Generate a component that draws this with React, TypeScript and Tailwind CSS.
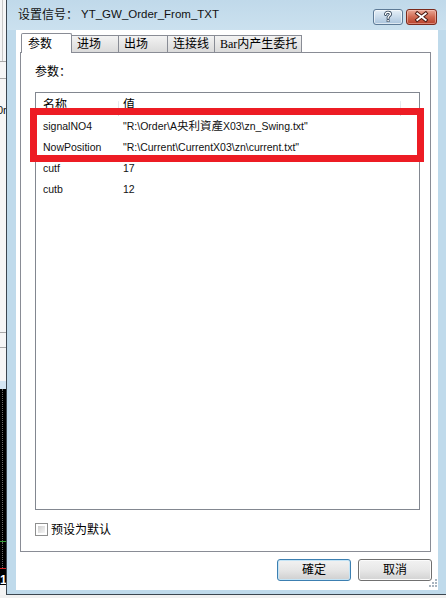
import React from "react";

function HelpBtn() {
  return (
    <div className="w-[30px] h-[16px] rounded-[3px] border border-[#5d7a96] bg-gradient-to-b from-[#e6eff7] via-[#c9dbeb] to-[#a9c3dc] shadow-[inset_0_0_0_1px_rgba(255,255,255,0.6)] flex items-center justify-center">
      <svg width="30" height="16" viewBox="0 0 30 16">
        <path d="M12.4 5.2C12.4 3.7 13.5 2.9 15 2.9C16.6 2.9 17.6 3.7 17.6 5C17.6 6.6 15.1 6.9 15.1 8.7V9.4" fill="none" stroke="#2c3e52" strokeWidth="3.2" strokeLinecap="round" />
        <rect x="13.6" y="10.6" width="3" height="2.8" fill="#2c3e52" />
        <path d="M12.4 5.2C12.4 3.7 13.5 2.9 15 2.9C16.6 2.9 17.6 3.7 17.6 5C17.6 6.6 15.1 6.9 15.1 8.7V9.4" fill="none" stroke="#ffffff" strokeWidth="1.5" strokeLinecap="round" />
        <rect x="14.3" y="11.2" width="1.6" height="1.6" fill="#ffffff" />
      </svg>
    </div>
  );
}

function CloseBtn() {
  return (
    <div className="w-[31px] h-[16px] rounded-[3px] border border-[#7b2a1c] bg-gradient-to-b from-[#e9a796] via-[#d06a52] to-[#b8402a] shadow-[inset_0_0_0_1px_rgba(255,220,210,0.45)] flex items-center justify-center">
      <svg width="31" height="16" viewBox="0 0 31 16">
        <path d="M11 4.2L20 11.2M20 4.2L11 11.2" stroke="#4a1810" strokeWidth="4" strokeLinecap="square" />
        <path d="M11 4.2L20 11.2M20 4.2L11 11.2" stroke="#ffffff" strokeWidth="2" strokeLinecap="square" />
      </svg>
    </div>
  );
}

function LeftStrip() {
  return (
    <div className="w-[6px] flex flex-col bg-[#f6f6f6] overflow-hidden">
      <div className="h-[61px] border-l border-[#c8c8c8] ml-[2px]" />
      <div className="h-px bg-[#a9a9a9]" />
      <div className="h-[16px]" />
      <div className="h-px bg-[#a9a9a9]" />
      <div className="h-[24px]" />
      <div className="h-[14px] text-[11px] leading-[14px] whitespace-nowrap -ml-[3px] text-[#111]">0r</div>
      <div className="h-[215px]" />
      <div className="h-px bg-[#a9a9a9]" />
      <div className="h-[14px]" />
      <div className="h-px bg-[#a9a9a9]" />
      <div className="h-[33px]" />
      <div className="h-[8px] bg-[#d4e6f3]" />
      <div className="h-[196px] bg-black flex flex-col">
        <div className="h-[152px] ml-[2px] border-l border-dotted border-[#6a6a6a]" />
        <div className="h-px bg-[#33a033]" />
        <div className="h-[26px] ml-[2px] border-l border-dotted border-[#6a6a6a]" />
        <div className="h-px bg-[#d42020]" />
        <div className="h-[6px]" />
        <div className="h-[10px] text-white text-[12px] leading-[10px] font-bold">1</div>
      </div>
      <div className="flex-1 bg-[#f4f4f4]" />
    </div>
  );
}

const tabBase =
  "h-[17px] border-t border-r border-[#898c95] bg-gradient-to-b from-[#f3f3f3] to-[#dadada] pl-[5px] flex items-center text-[12px] leading-none whitespace-nowrap";

export default function App() {
  return (
    <div className="relative w-[446px] h-[598px] overflow-hidden bg-[#f0f0f0] [font-family:'Liberation_Sans','Noto_Sans_CJK_SC',sans-serif] text-black">
      <div className="flex h-[595px]">
        <LeftStrip />
        <div className="flex-1 flex flex-col border-l border-b border-[#3b4650] bg-[#bfdaeb]">
          {/* title bar */}
          <div className="h-[30px] flex pl-[11px] pr-[9px] bg-gradient-to-b from-[#c0d9ea] to-[#cbe1ef]">
            <div className="flex items-center text-[12px] leading-none text-[#111]">
              <span>设置信号：</span>
              <span className="ml-[3px] text-[11.5px]">YT_GW_Order_From_TXT</span>
            </div>
            <div className="ml-auto flex gap-[3px] mt-[9px] h-[16px]">
              <HelpBtn />
              <CloseBtn />
            </div>
          </div>

          {/* client area */}
          <div className="relative ml-[9px] mr-[8px] h-[560px] bg-white flex flex-col">
            {/* tabs */}
            <div className="relative z-10 mt-[3px] ml-[5px] h-[19px] flex items-end">
              <div className="w-[51px] h-[20px] -mb-px border border-b-0 border-[#898c95] bg-white pl-[6px] flex items-center text-[12px] leading-none rounded-t-[2px]">
                参数
              </div>
              <div className={tabBase + " w-[47px]"}>进场</div>
              <div className={tabBase + " w-[49px]"}>出场</div>
              <div className={tabBase + " w-[47px]"}>连接线</div>
              <div className={tabBase + " w-[87px]"}>
                <span className="[font-family:'Liberation_Serif',serif] text-[12px]">Bar</span>
                <span>内产生委托</span>
              </div>
            </div>

            {/* panel */}
            <div className="ml-[4px] w-[411px] h-[500px] border border-[#898c95] bg-white flex flex-col pl-[14px] pr-[10px] pt-[11px]">
              <div className="h-[16px] text-[12px] leading-[16px]">参数：</div>

              {/* list view */}
              <div className="mt-[12px] h-[418px] border border-[#828790] bg-white flex flex-col">
                <div className="h-[23px] flex">
                  <div className="w-[82px] pl-[7px] flex items-center text-[12px] leading-none">名称</div>
                  <div className="w-px mt-[8px] bg-gradient-to-b from-[#e8edf2] to-[#d5dbe2]" />
                  <div className="w-[281px] pl-[4px] flex items-center text-[12px] leading-none">值</div>
                  <div className="w-px mt-[8px] bg-gradient-to-b from-[#e8edf2] to-[#d5dbe2]" />
                </div>
                <div className="h-[21px] flex items-center text-[10.5px] leading-none text-[#111]">
                  <div className="w-[82px] pl-[7px] whitespace-nowrap">signalNO4</div>
                  <div className="pl-[5px] whitespace-nowrap">
                    "R:\Order\A<span className="text-[11.5px]">央利資產</span>X03\zn_Swing.txt"
                  </div>
                </div>
                <div className="h-[21px] flex items-center text-[10.5px] leading-none text-[#111]">
                  <div className="w-[82px] pl-[7px] whitespace-nowrap">NowPosition</div>
                  <div className="pl-[5px] whitespace-nowrap">"R:\Current\CurrentX03\zn\current.txt"</div>
                </div>
                <div className="h-[21px] flex items-center text-[10.5px] leading-none text-[#111]">
                  <div className="w-[82px] pl-[7px] whitespace-nowrap">cutf</div>
                  <div className="pl-[5px] whitespace-nowrap">17</div>
                </div>
                <div className="h-[21px] flex items-center text-[10.5px] leading-none text-[#111]">
                  <div className="w-[82px] pl-[7px] whitespace-nowrap">cutb</div>
                  <div className="pl-[5px] whitespace-nowrap">12</div>
                </div>
              </div>

              {/* checkbox */}
              <div className="mt-[13px] h-[13px] flex items-center gap-[3px]">
                <div className="w-[13px] h-[13px] border border-[#8e8f8f] bg-white p-[2px]">
                  <div className="w-full h-full bg-gradient-to-br from-[#cfcfcf] to-[#f6f6f6]" />
                </div>
                <span className="text-[12px] leading-none">预设为默认</span>
              </div>
            </div>

            {/* buttons */}
            <div className="mt-[7px] flex justify-end gap-[7px] pr-[6px]">
              <div className="w-[74px] h-[22px] rounded-[3px] border border-[#3c7fb1] bg-gradient-to-b from-[#f2f2f2] via-[#e6e6e6] to-[#cfcfcf] shadow-[inset_0_0_0_1px_#c4e4f6] flex items-center justify-center text-[12px] leading-none">
                確定
              </div>
              <div className="w-[74px] h-[22px] rounded-[3px] border border-[#707070] bg-gradient-to-b from-[#f2f2f2] via-[#e8e8e8] to-[#d2d2d2] shadow-[inset_0_0_0_1px_#fbfbfb] flex items-center justify-center text-[12px] leading-none">
                取消
              </div>
            </div>

            {/* size grip */}
            <div className="absolute right-[1px] bottom-[3px] w-[8px] h-[8px] grid grid-cols-3 grid-rows-3 gap-[1px]">
              <span />
              <span />
              <span className="bg-[#a8b4bf]" />
              <span />
              <span className="bg-[#a8b4bf]" />
              <span className="bg-[#a8b4bf]" />
              <span className="bg-[#a8b4bf]" />
              <span className="bg-[#a8b4bf]" />
              <span className="bg-[#a8b4bf]" />
            </div>
          </div>
        </div>
      </div>

      {/* red annotation box */}
      <div className="absolute left-[30px] top-[108px] w-[394px] h-[54px] border-[7px] border-[#ed1c24]" />
    </div>
  );
}
